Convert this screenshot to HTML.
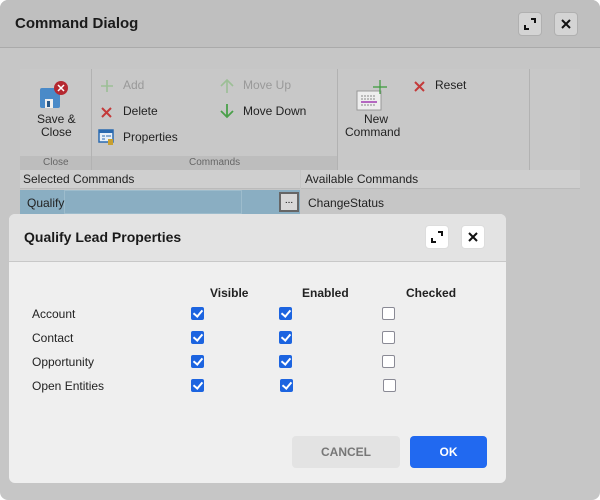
<!DOCTYPE html>
<html><head><style>
*{margin:0;padding:0;box-sizing:border-box}
body{width:600px;height:500px;overflow:hidden;background:#fff;font-family:"Liberation Sans",sans-serif;position:relative}
.o{position:absolute;left:0;top:0;width:600px;height:500px;background:#c6c6c6;border-radius:8px}
.oh{position:absolute;left:0;top:0;width:600px;height:48px;background:#bfbfbf;border-bottom:1px solid #aaa;border-radius:8px 8px 0 0}
.t{position:absolute;font-size:12px;color:#222;white-space:nowrap}
.btn{position:absolute;width:24px;height:24px;border-radius:4px;border:1px solid #b0b0b0}
.ab{position:absolute}
.cb{position:absolute;width:13px;height:13px;border-radius:2px}
.on{background:#1c64e0}
.off{background:#fff;border:1px solid #8a8a95}
.on::after{content:"";position:absolute;left:4px;top:1px;width:4px;height:7px;border:solid #fff;border-width:0 2px 2px 0;transform:rotate(40deg)}
</style></head><body>
<div class="o"></div>
<div class="oh"></div>
<div class="t" style="left:15px;top:15px;font-size:15px;font-weight:bold;color:#1a1a1a">Command Dialog</div>
<div class="btn" style="left:518px;top:12px;background:#d4d4d4">
<svg width="24" height="24" style="position:absolute;left:-1px;top:-1px"><path d="M7 13v4h4M13 7h4v4" fill="none" stroke="#111" stroke-width="2"/></svg></div>
<div class="btn" style="left:554px;top:12px;background:#d4d4d4">
<svg width="24" height="24" style="position:absolute;left:-1px;top:-1px"><path d="M8 8l8 8M16 8l-8 8" stroke="#111" stroke-width="2"/></svg></div>

<div class="ab" style="left:20px;top:69px;width:560px;height:101px;background:#c8c8c8"></div>
<div class="ab" style="left:20px;top:156px;width:317px;height:14px;background:#bdbdbd"></div>
<div class="ab" style="left:91px;top:69px;width:1px;height:101px;background:#b2b2b2"></div>
<div class="ab" style="left:337px;top:69px;width:1px;height:101px;background:#b2b2b2"></div>
<div class="ab" style="left:529px;top:69px;width:1px;height:101px;background:#b2b2b2"></div>
<div class="t" style="left:43px;top:157px;font-size:10px;color:#666">Close</div>
<div class="t" style="left:189px;top:157px;font-size:10px;color:#666">Commands</div>
<svg class="ab" style="left:38px;top:80px" width="32" height="32"><rect x="2" y="8" width="20" height="20" rx="2" fill="#4a8ac8"/><rect x="7" y="19" width="8" height="9" fill="#eee"/><rect x="9" y="21" width="3" height="6" fill="#2a5a8a"/><circle cx="23" cy="8" r="7" fill="#b52830"/><path d="M20 5l6 6M26 5l-6 6" stroke="#fff" stroke-width="1.5"/></svg>
<div class="t" style="left:37px;top:113px;text-align:center;line-height:13px">Save &amp;<br>Close</div>
<svg class="ab" style="left:99px;top:78px" width="16" height="16"><path d="M8 2v12M2 8h12" stroke="#9cbf96" stroke-width="1.6"/></svg>
<div class="t" style="left:123px;top:78px;color:#999">Add</div>
<svg class="ab" style="left:99px;top:104px" width="16" height="16"><path d="M3 4l9 9M12 4l-9 9" stroke="#c43a3a" stroke-width="2"/></svg>
<div class="t" style="left:123px;top:104px">Delete</div>
<svg class="ab" style="left:98px;top:128px" width="18" height="18"><rect x="1" y="2" width="14" height="12" fill="#e8f0f8" stroke="#2a6ab0" stroke-width="1.5"/><rect x="1" y="2" width="14" height="3" fill="#2a6ab0"/><path d="M4 8h3M8 8h5M4 11h3" stroke="#2a6ab0"/><path d="M10 11h5v6h-5z" fill="#c8a030"/></svg>
<div class="t" style="left:123px;top:130px">Properties</div>
<svg class="ab" style="left:218px;top:77px" width="18" height="18"><path d="M9 16V3M3 9l6-6 6 6" fill="none" stroke="#9cbf96" stroke-width="1.6"/></svg>
<div class="t" style="left:243px;top:78px;color:#999">Move Up</div>
<svg class="ab" style="left:218px;top:102px" width="18" height="18"><path d="M9 2v13M3 9l6 6 6-6" fill="none" stroke="#4aa04a" stroke-width="1.8"/></svg>
<div class="t" style="left:243px;top:104px">Move Down</div>
<svg class="ab" style="left:355px;top:80px" width="40" height="32"><rect x="2" y="11" width="24" height="19" fill="#eee" stroke="#999"/><path d="M6 16h14M6 19h14M6 22h14M6 25h14" stroke="#888" stroke-dasharray="2 1"/><path d="M6 22h16" stroke="#a03ab0" stroke-width="1.5"/><path d="M25 0v14M18 7h14" stroke="#3a9a3a" stroke-width="1.2"/></svg>
<div class="t" style="left:345px;top:113px;text-align:center;line-height:13px">&nbsp;&nbsp;New<br>Command</div>
<svg class="ab" style="left:412px;top:78px" width="16" height="16"><path d="M3 4l9 9M12 4l-9 9" stroke="#c43a3a" stroke-width="2"/></svg>
<div class="t" style="left:435px;top:78px">Reset</div>

<div class="ab" style="left:20px;top:170px;width:280px;height:19px;background:#cfcfcf;border-bottom:1px solid #bbb"></div>
<div class="ab" style="left:301px;top:170px;width:279px;height:19px;background:#cfcfcf;border-bottom:1px solid #bbb"></div>
<div class="t" style="left:23px;top:172px">Selected Commands</div>
<div class="t" style="left:305px;top:172px">Available Commands</div>
<div class="ab" style="left:20px;top:190px;width:280px;height:24px;background:#8aaec2"></div>
<div class="ab" style="left:64px;top:190px;width:178px;height:24px;border:1px solid #9dbccc"></div>
<div class="t" style="left:27px;top:196px">Qualify</div>
<div class="ab" style="left:279px;top:192px;width:20px;height:20px;background:#d8d8d8;border:2px solid #666;font-size:10px;text-align:center;line-height:14px">...</div>
<div class="t" style="left:308px;top:196px">ChangeStatus</div>

<div class="ab" style="left:9px;top:214px;width:497px;height:269px;background:#efefef;border-radius:6px;overflow:hidden">
<div class="ab" style="left:0;top:0;width:497px;height:48px;background:#e3e3e3;border-bottom:1px solid #c8c8c8"></div>
</div>
<div class="t" style="left:24px;top:229px;font-size:14px;font-weight:bold;color:#1a1a1a">Qualify Lead Properties</div>
<div class="btn" style="left:425px;top:225px;background:#fff;border-color:#ddd">
<svg width="24" height="24" style="position:absolute;left:-1px;top:-1px"><path d="M7 13v4h4M13 7h4v4" fill="none" stroke="#111" stroke-width="2"/></svg></div>
<div class="btn" style="left:461px;top:225px;background:#fff;border-color:#ddd">
<svg width="24" height="24" style="position:absolute;left:-1px;top:-1px"><path d="M8 8l8 8M16 8l-8 8" stroke="#111" stroke-width="2"/></svg></div>
<div class="t" style="left:210px;top:286px;font-weight:bold">Visible</div>
<div class="t" style="left:302px;top:286px;font-weight:bold">Enabled</div>
<div class="t" style="left:406px;top:286px;font-weight:bold">Checked</div>
<div class="t" style="left:32px;top:307px">Account</div>
<div class="t" style="left:32px;top:331px">Contact</div>
<div class="t" style="left:32px;top:355px">Opportunity</div>
<div class="t" style="left:32px;top:379px">Open Entities</div>
<div class="cb on" style="left:191px;top:307px"></div><div class="cb on" style="left:279px;top:307px"></div><div class="cb off" style="left:382px;top:307px"></div>
<div class="cb on" style="left:191px;top:331px"></div><div class="cb on" style="left:279px;top:331px"></div><div class="cb off" style="left:382px;top:331px"></div>
<div class="cb on" style="left:191px;top:355px"></div><div class="cb on" style="left:279px;top:355px"></div><div class="cb off" style="left:382px;top:355px"></div>
<div class="cb on" style="left:191px;top:379px"></div><div class="cb on" style="left:280px;top:379px"></div><div class="cb off" style="left:383px;top:379px"></div>
<div class="ab" style="left:292px;top:436px;width:108px;height:32px;background:#e3e3e3;border-radius:4px;color:#777;font-weight:bold;font-size:12px;text-align:center;line-height:32px">CANCEL</div>
<div class="ab" style="left:410px;top:436px;width:77px;height:32px;background:#2169f0;border-radius:4px;color:#fff;font-weight:bold;font-size:12px;text-align:center;line-height:32px">OK</div>
</body></html>
